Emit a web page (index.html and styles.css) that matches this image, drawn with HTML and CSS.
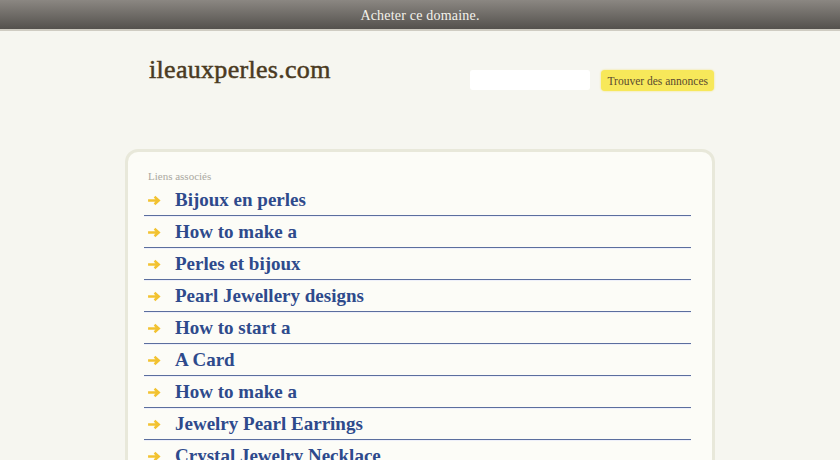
FILE: index.html
```html
<!DOCTYPE html>
<html lang="fr">

<head>
    <meta charset="UTF-8">
    <meta name="viewport" content="width=device-width, initial-scale=1.0">
    <title>ileauxperles.com</title>
    <link rel="stylesheet" href="styles.css">
</head>

<body>
    <div class="topbar">
        <a href="#">Acheter ce domaine.</a>
    </div>
    <div class="wrapper">
        <div class="header">
            <h1>ileauxperles.com</h1>
            <form class="search">
                <input type="text">
                <button type="button">Trouver des annonces</button>
            </form>
        </div>
        <div class="links-box">
            <div class="links-title">Liens associés</div>
            <ul class="links">
                <li><svg class="arrow" viewBox="0 0 14 10"><path d="M1 5h10M7 1.5l4 3.5-4 3.5" /></svg><a href="#">Bijoux en perles</a></li>
                <li><svg class="arrow" viewBox="0 0 14 10"><path d="M1 5h10M7 1.5l4 3.5-4 3.5" /></svg><a href="#">How to make a</a></li>
                <li><svg class="arrow" viewBox="0 0 14 10"><path d="M1 5h10M7 1.5l4 3.5-4 3.5" /></svg><a href="#">Perles et bijoux</a></li>
                <li><svg class="arrow" viewBox="0 0 14 10"><path d="M1 5h10M7 1.5l4 3.5-4 3.5" /></svg><a href="#">Pearl Jewellery designs</a></li>
                <li><svg class="arrow" viewBox="0 0 14 10"><path d="M1 5h10M7 1.5l4 3.5-4 3.5" /></svg><a href="#">How to start a</a></li>
                <li><svg class="arrow" viewBox="0 0 14 10"><path d="M1 5h10M7 1.5l4 3.5-4 3.5" /></svg><a href="#">A Card</a></li>
                <li><svg class="arrow" viewBox="0 0 14 10"><path d="M1 5h10M7 1.5l4 3.5-4 3.5" /></svg><a href="#">How to make a</a></li>
                <li><svg class="arrow" viewBox="0 0 14 10"><path d="M1 5h10M7 1.5l4 3.5-4 3.5" /></svg><a href="#">Jewelry Pearl Earrings</a></li>
                <li><svg class="arrow" viewBox="0 0 14 10"><path d="M1 5h10M7 1.5l4 3.5-4 3.5" /></svg><a href="#">Crystal Jewelry Necklace</a></li>
            </ul>
        </div>
    </div>
</body>

</html>
```

FILE: styles.css
```css
body {
    margin: 0;
    padding: 0;
    font-family: 'Liberation Serif', 'DejaVu Serif', serif;
    background-color: #f6f6f0;
    color: #4a3c28;
    overflow: hidden;
}

.topbar {
    height: 29px;
    background: linear-gradient(to bottom, #8b8782, #54514d);
    border-bottom: 2px solid #cfccc2;
    text-align: center;
    line-height: 30px;
}

.topbar a {
    color: #f4f2ec;
    font-size: 14px;
    text-decoration: none;
    letter-spacing: 0.2px;
}

.wrapper {
    width: 590px;
    margin: 0 auto;
}

.header {
    display: flex;
    justify-content: space-between;
    align-items: flex-start;
    height: 118px;
}

.header h1 {
    margin: 24px 0 0 24px;
    font-size: 26px;
    font-weight: normal;
    letter-spacing: 0.3px;
    color: #4a3a22;
    -webkit-text-stroke: 0.5px #4a3a22;
}

.search {
    display: flex;
    gap: 11px;
    margin-top: 39px;
    margin-right: 1px;
}

.search input {
    width: 120px;
    height: 20px;
    box-sizing: border-box;
    border: none;
    border-radius: 3px;
    background-color: #fff;
    padding: 0;
}

.search button {
    height: 21px;
    padding: 0 6px;
    border: none;
    border-radius: 4px;
    background-color: #f7e85a;
    color: #5a4a30;
    font-family: 'Liberation Serif', serif;
    font-size: 11.5px;
    box-shadow: 0 0 2px rgba(240, 220, 80, 0.8);
}

.links-box {
    background-color: #fcfcf7;
    border: 3px solid #e8e8da;
    border-radius: 13px;
    padding: 18px 21px 20px 16px;
    height: 400px;
}

.links-title {
    font-size: 11px;
    color: #aaa8a0;
    padding-left: 4px;
    margin-bottom: 2px;
}

.links {
    list-style: none;
    margin: 0;
    padding: 0;
}

.links li {
    display: flex;
    align-items: center;
    height: 31px;
    border-bottom: 1px solid #5b6e9e;
    box-shadow: 0 1px 0 #eef0fa;
}

.arrow {
    width: 15px;
    height: 11px;
    margin: 1px 13px 0 3px;
    fill: none;
    stroke: #f2c230;
    stroke-width: 2.2;
}

.links a {
    color: #2e4a8c;
    font-size: 19px;
    font-weight: bold;
    text-decoration: none;
}
```
